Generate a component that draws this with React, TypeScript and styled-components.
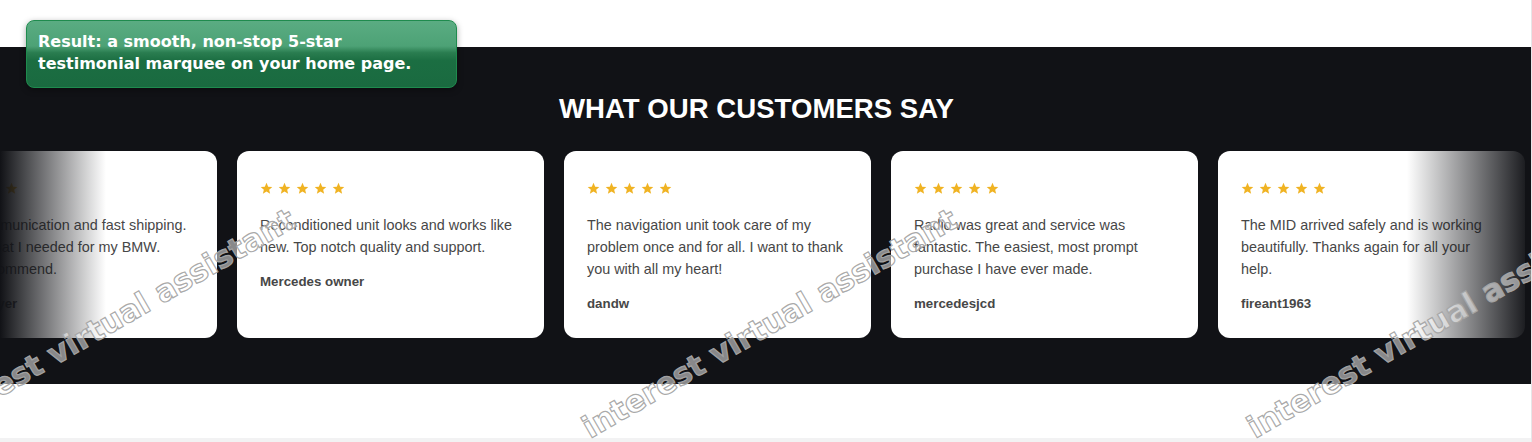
import React from 'react'
import styled, { createGlobalStyle } from 'styled-components'

const GlobalStyle = createGlobalStyle`
  html, body {
    margin: 0;
    padding: 0;
    background: #ffffff;
  }
  body {
    font-family: 'Liberation Sans', Arial, sans-serif;
    overflow: hidden;
  }
`

interface Review {
    text: string
    author: string
}

const reviews: Review[] = [
    {
        text: 'Great communication and fast shipping. Exactly what I needed for my BMW. Highly recommend.',
        author: 'Repeat buyer',
    },
    {
        text: 'Reconditioned unit looks and works like new. Top notch quality and support.',
        author: 'Mercedes owner',
    },
    {
        text: 'The navigation unit took care of my problem once and for all. I want to thank you with all my heart!',
        author: 'dandw',
    },
    {
        text: 'Radio was great and service was fantastic. The easiest, most prompt purchase I have ever made.',
        author: 'mercedesjcd',
    },
    {
        text: 'The MID arrived safely and is working beautifully. Thanks again for all your help.',
        author: 'fireant1963',
    },
]

const Page = styled.div`
  position: relative;
  width: 1532px;
  height: 442px;
  overflow: hidden;
  padding-top: 47px;
  box-sizing: border-box;
  border-right: 1px solid #e6e6e8;
`

const Band = styled.section`
  background: #111216;
  height: 337px;
  padding: 46px 0 0;
  box-sizing: border-box;
  display: flex;
  flex-direction: column;
  align-items: stretch;
`

const Title = styled.h2`
  margin: 0 0 27px;
  padding-right: 18px;
  text-align: center;
  color: #ffffff;
  font-family: 'Liberation Sans', Arial, sans-serif;
  font-weight: 700;
  font-size: 27.6px;
  line-height: 31px;
`

const Viewport = styled.div`
  position: relative;
  overflow: hidden;
`

const Track = styled.div`
  display: flex;
  gap: 20px;
  transform: translateX(-90px);
`

const Card = styled.article`
  flex: 0 0 307px;
  height: 187px;
  box-sizing: border-box;
  background: #ffffff;
  border-radius: 12px;
  padding: 27px 23px 0;
`

const Stars = styled.div`
  display: flex;
  gap: 5px;
  height: 20px;
  align-items: center;
  margin-bottom: 16px;
`

const Quote = styled.p`
  margin: 0 0 15px;
  color: #474747;
  font-size: 14.4px;
  line-height: 22px;
`

const Author = styled.div`
  color: #474747;
  font-size: 13.3px;
  font-weight: 700;
  line-height: 18px;
`

const Fade = styled.div<{ $side: 'left' | 'right' }>`
  position: absolute;
  top: 0;
  bottom: 0;
  ${(p) => (p.$side === 'left' ? 'left: 0;' : 'right: 0;')}
  width: ${(p) => (p.$side === 'left' ? '106px' : '124px')};
  background: linear-gradient(
    ${(p) => (p.$side === 'left' ? 'to right' : 'to left')},
    #111216 0%,
    rgba(17, 18, 22, 0.75) 25%,
    rgba(17, 18, 22, 0) 100%
  );
  pointer-events: none;
`

const Bottom = styled.div`
  height: 54px;
  border-bottom: 4px solid #f2f2f3;
`

const Badge = styled.div`
  position: absolute;
  left: 26px;
  top: 20px;
  width: 431px;
  height: 68px;
  box-sizing: border-box;
  padding: 10px 11px 0;
  border: 1px solid #1f8b4e;
  border-radius: 8px;
  background: linear-gradient(
    180deg,
    #5aac82 0%,
    #4da276 38%,
    #2a7d50 48%,
    #1b6e42 60%,
    #1a6a40 100%
  );
  box-shadow: 0 2px 6px rgba(0, 0, 0, 0.35);
  color: #ffffff;
  font-family: 'DejaVu Sans', Verdana, sans-serif;
  font-weight: 700;
  font-size: 16px;
  line-height: 22px;
`

const Watermark = styled.span<{ $x: number }>`
  position: absolute;
  left: ${(p) => p.$x}px;
  top: 410px;
  transform-origin: 0 100%;
  transform: rotate(-30deg);
  white-space: nowrap;
  font-family: 'DejaVu Sans', Verdana, sans-serif;
  font-weight: 700;
  font-size: 30.5px;
  line-height: 36px;
  color: rgba(255, 255, 255, 0.5);
  -webkit-text-stroke: 1.2px rgba(165, 165, 165, 0.95);
  pointer-events: none;
`

const StarIcon = () => (
    <svg width="13" height="13" viewBox="0 0 24 24">
        <path
            d="M12 1.5l3.1 7.1 7.6.6-5.8 5 1.8 7.5L12 17.7l-6.7 4 1.8-7.5-5.8-5 7.6-.6z"
            fill="#f0b323"
        />
    </svg>
)

const App = () => (
    <>
        <GlobalStyle />
        <Page>
            <Band>
                <Title>WHAT OUR CUSTOMERS SAY</Title>
                <Viewport>
                    <Track>
                        {reviews.map((r) => (
                            <Card key={r.author}>
                                <Stars>
                                    {[0, 1, 2, 3, 4].map((i) => (
                                        <StarIcon key={i} />
                                    ))}
                                </Stars>
                                <Quote>{r.text}</Quote>
                                <Author>{r.author}</Author>
                            </Card>
                        ))}
                    </Track>
                    <Fade $side="left" />
                    <Fade $side="right" />
                </Viewport>
            </Band>
            <Bottom />
            <Badge>
                Result: a smooth, non-stop 5-star
                <br />
                testimonial marquee on your home page.
            </Badge>
            <Watermark $x={-68}>interest virtual assistant</Watermark>
            <Watermark $x={594}>interest virtual assistant</Watermark>
            <Watermark $x={1259}>interest virtual assistant</Watermark>
        </Page>
    </>
)

export default App
